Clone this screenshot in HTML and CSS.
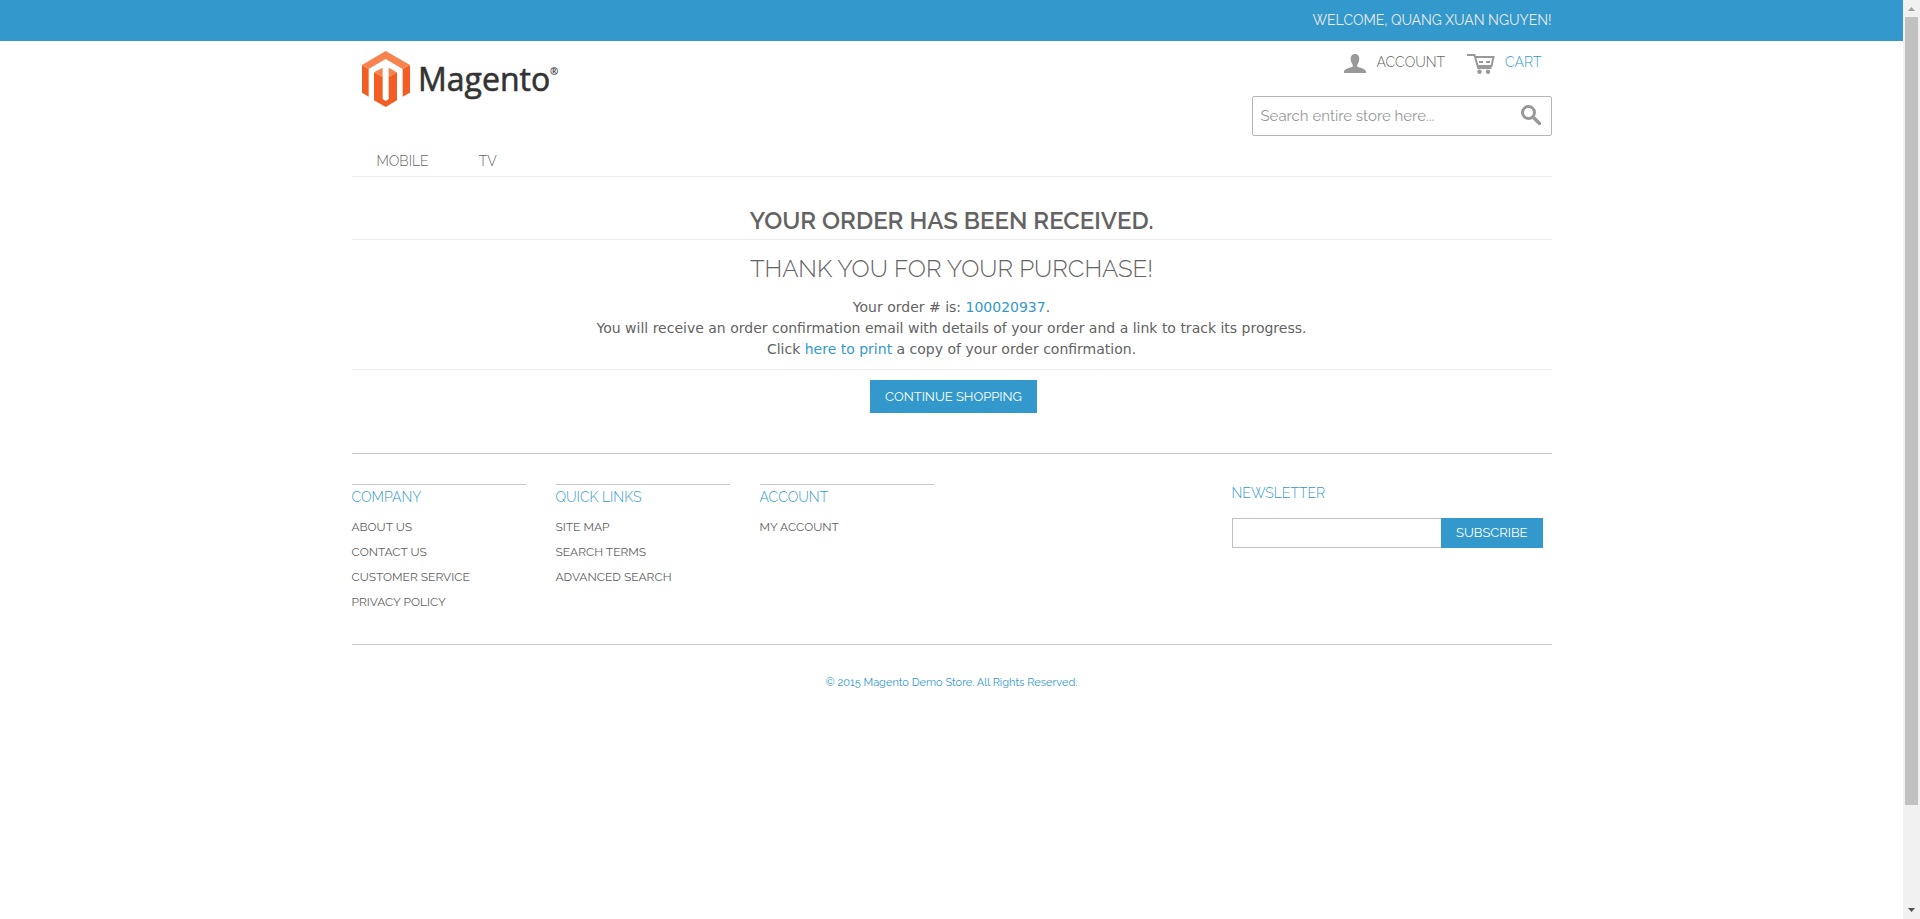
FILE: index.html
```html
<!DOCTYPE html>
<html lang="en">
<head>
<meta charset="utf-8">
<title>Magento Demo Store</title>
<link rel="stylesheet" href="styles.css">
</head>
<body>
<div class="page">
  <div class="topbar"><p class="container welcome">Welcome, Quang Xuan Nguyen!</p></div>
  <header class="container header">
    <a class="logo" href="#" aria-label="Magento">
      <svg width="200" height="60" viewBox="0 0 200 60">
        <g transform="translate(0 1) scale(.33333)">
          <path fill="#f15d22" d="M0 42L20 54V137L0 125ZM144 42L122 54V137L144 125ZM36 64L62 78V144L71 150L80 144V78L105 64V148L71 168L36 148Z"/>
          <path fill="#f7844f" d="M71 0L144 42L122 54L71 24L20 54L0 42ZM36 64L62 50V79ZM105 64L80 50V79Z"/>
        </g>
        <text x="56" y="41" class="wordmark">Magento</text>
        <text x="188" y="25" class="registered">®</text>
      </svg>
    </a>
    <div class="tools">
      <div class="account-links">
        <a href="#"><svg width="22" height="20" viewBox="0 0 22 20"><path fill="#999" d="M11 0c3 0 4.500 2 4.300 5c-.1 3-1.300 4.500-2 5.700v2c3 1 8.700 2.300 8.700 4.800v1.500H0v-1.500c0-2.500 5.700-3.800 8.700-4.800v-2c-.7-1.200-1.900-2.700-2-5.700C6.500 2 8 0 11 0z"/></svg>Account</a>
        <a href="#" class="cart"><svg width="28" height="20" viewBox="0 0 28 20"><g fill="none" stroke="#999" stroke-width="2"><path d="M0 1h7.500l3.700 13h13.300M7.500 3h19L24.500 12H11"/><path d="M12 8h4m3 0h4"/></g><circle cx="12.500" cy="17.700" r="2.200" fill="#999"/><circle cx="21" cy="17.700" r="2.200" fill="#999"/></svg>Cart</a>
      </div>
      <form class="search">
        <input type="search" aria-label="Search" placeholder="Search entire store here...">
        <button type="button" aria-label="Search"><svg width="20" height="20" viewBox="0 0 20 20" fill="none" stroke="#999"><circle cx="7.500" cy="7.500" r="6" stroke-width="3"/><path d="M12 12l6.500 6.500" stroke-width="3.500" stroke-linecap="round"/></svg></button>
      </form>
    </div>
  </header>
  <nav class="container nav"><a href="#">Mobile</a><a href="#">TV</a></nav>
  <main class="container">
    <h1>Your order has been received.</h1>
    <h2>Thank you for your purchase!</h2>
    <p class="message">Your order # is: <a href="#">100020937</a>.<br>You will receive an order confirmation email with details of your order and a link to track its progress.<br>Click <a href="#">here to print</a> a copy of your order confirmation.</p>
    <div class="actions"><button type="button" class="button">Continue Shopping</button></div>
  </main>
  <footer class="container">
    <div class="footer-main">
      <section class="links"><h3>Company</h3><ul><li><a href="#">About Us</a></li><li><a href="#">Contact Us</a></li><li><a href="#">Customer Service</a></li><li><a href="#">Privacy Policy</a></li></ul></section>
      <section class="links"><h3>Quick Links</h3><ul><li><a href="#">Site Map</a></li><li><a href="#">Search Terms</a></li><li><a href="#">Advanced Search</a></li></ul></section>
      <section class="links"><h3>Account</h3><ul><li><a href="#">My Account</a></li></ul></section>
      <form class="newsletter">
        <label for="email">Newsletter</label>
        <div class="subscribe"><input id="email" type="email"><button type="button" class="button">Subscribe</button></div>
      </form>
    </div>
    <p class="copyright">© 2015 Magento Demo Store. All Rights Reserved.</p>
  </footer>
</div>
<div class="scrollbar" aria-hidden="true">
  <svg width="17" height="17"><path fill="#a3a3a3" d="M5 11h7L8.500 7z"/></svg>
  <div class="track"><div class="thumb"></div></div>
  <svg width="17" height="17"><path fill="#505050" d="M5 6h7L8.500 10z"/></svg>
</div>
</body>
</html>
```

FILE: styles.css
```css
* { box-sizing: border-box; }
body {
  margin: 0;
  display: flex;
  height: 100vh;
  overflow: hidden;
  background: #fff;
  color: #636363;
  font: 400 14px/20px Raleway, Lato, sans-serif;
}
a { color: inherit; text-decoration: none; }
h1, h2, h3, p, ul { margin: 0; padding: 0; }
ul { list-style: none; }
input, button { font: inherit; margin: 0; border-radius: 0; }
svg { display: block; overflow: visible; }

.page { flex: 1; min-width: 0; overflow: hidden; }
.container { width: 100%; max-width: 1200px; margin: 0 auto; }

.topbar { background: #3399cc; }
.welcome {
  padding: 10px 0 11px;
  color: #ebebeb;
  text-align: right;
  text-transform: uppercase;
}

.header { display: flex; justify-content: space-between; }
.logo { padding: 9px 10px; }
.wordmark { font: 400 32px "Open Sans", sans-serif; fill: #333; stroke: #333; stroke-width: .6px; }
.registered { font: 700 10px "Open Sans", sans-serif; fill: #333; }
.tools { width: 300px; padding-top: 10px; }
.account-links {
  display: flex;
  justify-content: flex-end;
  gap: 22px;
  padding: 1px 10px 0 0;
  font-weight: 300;
  text-transform: uppercase;
}
.account-links a { display: flex; gap: 10px; }
.account-links svg { margin-top: 2px; }
.cart { color: #3399cc; }
.search {
  display: flex;
  align-items: center;
  height: 40px;
  margin-top: 22px;
  border: 1px solid #b5b5b5;
  border-radius: 2px;
}
.search input {
  flex: 1;
  min-width: 0;
  padding: 0 8px;
  border: 0;
  background: none;
  font-size: 15px;
}
.search input::placeholder { color: #999; opacity: 1; }
.search button { padding: 0 10px 2px 0; border: 0; background: none; }

.nav {
  display: flex;
  gap: 50px;
  padding: 15px 25px 5px;
  border-bottom: 1px solid #ededed;
  font-weight: 300;
  text-transform: uppercase;
}

main { text-align: center; }
h1, h2 { font-size: 24px; line-height: 28px; text-transform: uppercase; }
h1 { padding: 30px 0 4px; border-bottom: 1px solid #ededed; font-weight: 600; }
h2 { padding: 15px 0 14px; font-weight: 300; }
.message {
  padding-bottom: 9px;
  border-bottom: 1px solid #ededed;
  font: 400 14px/21px Verdana, "DejaVu Sans", sans-serif;
}
.message a { color: #3399cc; }
.actions { display: flex; justify-content: center; padding: 10px 0 40px 4px; }
.button {
  padding: 0 15px;
  border: 0;
  background: #3399cc;
  color: #fff;
  font-size: 13px;
  line-height: 33px;
  text-transform: uppercase;
}

.footer-main {
  display: flex;
  gap: 30px;
  padding: 30px 9px 29px 0;
  border: solid #c8c8c8;
  border-width: 1px 0;
  font-weight: 300;
  text-transform: uppercase;
}
.links { width: 174px; border-top: 1px solid #c8c8c8; }
.links h3, .newsletter label {
  display: block;
  color: #3399cc;
  font-size: 14px;
  font-weight: 300;
  line-height: 24px;
}
.links ul { padding-top: 6px; font-size: 12px; font-weight: 400; line-height: 25px; }
.newsletter { width: 311px; margin-left: auto; }
.newsletter label { padding-bottom: 16px; line-height: 18px; }
.subscribe { display: flex; height: 30px; }
.subscribe input { flex: 1; min-width: 0; border: 1px solid #c0c0c0; border-right: 0; }
.subscribe .button { font-weight: 400; line-height: 30px; }
.copyright { padding: 28px 0; color: #3399cc; font-size: 11px; text-align: center; }

.scrollbar { display: flex; flex-direction: column; width: 17px; background: #f1f1f1; }
.track { flex: 1; padding: 0 2px; }
.thumb { height: 89%; background: #c1c1c1; }
```
